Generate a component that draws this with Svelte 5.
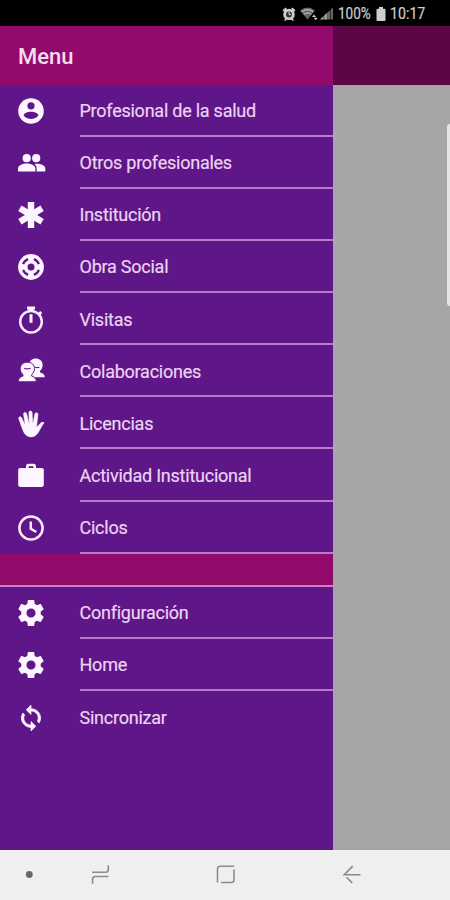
<script lang="ts">
	type Item = { label: string; icon: string };

	const main: Item[] = [
		{ label: 'Profesional de la salud', icon: 'contact' },
		{ label: 'Otros profesionales', icon: 'people' },
		{ label: 'Institución', icon: 'medical' },
		{ label: 'Obra Social', icon: 'help' },
		{ label: 'Visitas', icon: 'stopwatch' },
		{ label: 'Colaboraciones', icon: 'team' },
		{ label: 'Licencias', icon: 'hand' },
		{ label: 'Actividad Institucional', icon: 'briefcase' },
		{ label: 'Ciclos', icon: 'clock' }
	];

	const extra: Item[] = [
		{ label: 'Configuración', icon: 'settings' },
		{ label: 'Home', icon: 'settings' },
		{ label: 'Sincronizar', icon: 'sync' }
	];
</script>

{#snippet glyph(name: string)}
	<svg class="icon" viewBox="0 0 26 26" aria-hidden="true">
		{#if name === 'contact'}
			<circle cx="13" cy="13" r="12.8" />
			<circle class="hole" cx="13" cy="7.8" r="3.6" />
			<path class="hole" d="M5.6 17.6c0-2.7 4.2-3.9 7.4-3.9s7.4 1.2 7.4 3.9c-1.7 2.300-4.400 3.500-7.400 3.500s-5.700-1.200-7.400-3.500z" />
		{:else if name === 'people'}
			<circle cx="8.700" cy="8.200" r="4.100" />
			<circle cx="18.200" cy="8.200" r="4.100" />
			<path d="M0 21.500v-3c0-3.300 5.200-5 8.700-5s8.700 1.700 8.700 5v3z" />
			<path d="M18.700 21.500v-3.300c0-1.800-.9-3.200-2.300-4.300 4.200-.7 10.900.6 10.900 4.600v3z" />
		{:else if name === 'medical'}
			<path class="line thick" d="M13 0v26M1.900 6.300l22.200 13.400M24.100 6.300L1.900 19.700" />
		{:else if name === 'help'}
			<circle cx="13" cy="13" r="12.900" />
			<circle class="hole" cx="13" cy="13" r="3.500" />
			<path class="cut" d="M5.100 10.100A8.400 8.400 0 0 1 10.100 5.100M15.900 5.100a8.400 8.400 0 0 1 5 5M20.900 15.900a8.400 8.400 0 0 1-5 5M10.100 20.900a8.400 8.400 0 0 1-5-5" />
		{:else if name === 'stopwatch'}
			<circle class="line" cx="13" cy="14.700" r="10.800" />
			<path d="M9-.6h8v3H9zM10.300 2h5.400v2.500h-5.400zM11.500 7.300h3v8.500h-3zM20 6.300l2.200-2.300 2 2-2.100 2.400z" />
		{:else if name === 'team'}
			<path d="M10.6 5.800C11.200 2 14.100-.6 17.600-.6c4 0 7 2.500 7 6.100 0 2.700-.7 5-2.500 6.200l-.1 1.800c2.700.6 4.700 1.800 4.800 4.800H13z" />
			<path class="outlined" d="M9.400 3.200c4.200 0 7.100 2.700 7.100 6.200 0 2.500-.8 4.700-2.700 6l-.1 1.700c2.600.7 4.600 2.300 4.600 5.700H.2c0-3.400 2-5 4.800-5.700l-.1-1.700c-1.900-1.300-2.700-3.500-2.700-6 0-3.500 3-6.200 7.200-6.200z" />
			<path class="crease" d="M6.200 9.300c2 .7 4.300.7 6.400 0M17.200 8.300c1.300.5 2.800.5 4.200 0" />
		{:else if name === 'hand'}
			<path class="fat" d="M6.800 22.800C4.700 19.500 2.700 12.800.9 8c-.8-2.100 1.800-3.300 2.800-1.100l3 6.300.4-.1L5.600 3.400c-.4-2.200 2.400-2.900 3-.6l2.100 9.100h.5L10.900 1.700c0-2.200 3.100-2.200 3.200 0l.6 10h.5l1.700-8.600c.5-2.100 3.300-1.500 3 .7l-1.400 12.300c1.500-.5 2.200-2.100 3.500-3.400 1.200-1.200 2.700-1.800 4.100-1-2.300 2.700-4.200 7.400-7 11.300-2.800 3.800-9.500 4-12.300-.2z" />
		{:else if name === 'briefcase'}
			<path fill-rule="evenodd" d="M8 4.900V3.100c0-1.400.9-2.400 2.300-2.400h5.400c1.400 0 2.300 1 2.300 2.400v1.800h5.600c1.300 0 2.200.9 2.200 2.200v14.700c0 1.300-.9 2.200-2.200 2.200H2.400C1.100 24 .2 23.100.2 21.800V7.100c0-1.300.9-2.200 2.200-2.200zm2.600 0h4.800V3.300h-4.800z" />
		{:else if name === 'clock'}
			<circle class="line" cx="13" cy="13" r="11.600" />
			<path class="line" d="M12.800 6.500v7.200l5.500 3.300" />
		{:else if name === 'settings'}
			<path transform="matrix(1.3 0 0 1.3 -2.6 -2.6)" d="M19.43 12.98c.04-.32.07-.64.07-.98s-.03-.66-.07-.98l2.11-1.65c.19-.15.24-.42.12-.64l-2-3.46c-.12-.22-.39-.3-.61-.22l-2.49 1c-.52-.4-1.08-.73-1.69-.98l-.38-2.65C14.46 2.18 14.25 2 14 2h-4c-.25 0-.46.18-.49.42l-.38 2.65c-.61.25-1.17.59-1.69.98l-2.49-1c-.23-.09-.49 0-.61.22l-2 3.46c-.13.22-.07.49.12.64l2.11 1.65c-.04.32-.07.65-.07.98s.03.66.07.98l-2.11 1.65c-.19.15-.24.42-.12.64l2 3.46c.12.22.39.3.61.22l2.49-1c.52.4 1.08.73 1.69.98l.38 2.65c.03.24.24.42.49.42h4c.25 0 .46-.18.49-.42l.38-2.65c.61-.25 1.17-.59 1.69-.98l2.49 1c.23.09.49 0 .61-.22l2-3.46c.12-.22.07-.49-.12-.64l-2.11-1.65zM12 15.5c-1.93 0-3.5-1.57-3.5-3.5s1.57-3.5 3.5-3.5 3.5 1.57 3.5 3.5-1.57 3.5-3.5 3.5z" />
		{:else if name === 'sync'}
			<path class="fat" transform="matrix(1.2 0 0 1.17 -1.4 -1)" d="M12 4V1L8 5l4 4V6c3.31 0 6 2.69 6 6 0 1.01-.25 1.97-.7 2.8l1.46 1.46C19.54 15.03 20 13.57 20 12c0-4.42-3.58-8-8-8zm0 14c-3.31 0-6-2.69-6-6 0-1.01.25-1.97.7-2.8L5.24 7.74C4.46 8.97 4 10.43 4 12c0 4.42 3.58 8 8 8v3l4-4-4-4v3z" />
		{/if}
	</svg>
{/snippet}

{#snippet list(items: Item[])}
	<ul class="list">
		{#each items as item}
			<li class="item">
				{@render glyph(item.icon)}
				<span class="label">{item.label}</span>
			</li>
		{/each}
	</ul>
{/snippet}

<div class="screen">
	<div class="status">
		<svg class="alarm" viewBox="0 0 14 14" aria-hidden="true">
			<path d="M.5 3.2L3.6.5 5 2 2 4.7zM13.5 3.2L10.4.5 9 2l3 2.7zM1.8 13.6l2-2.4 1.4 1-1.7 1.6zM12.2 13.6l-2-2.4-1.4 1 1.7 1.6z" />
			<circle cx="7" cy="7.400" r="5.700" />
			<circle class="face" cx="7" cy="7.400" r="3" />
			<path class="hands" d="M7 5v2.600h2.200" />
		</svg>
		<svg class="wifi" viewBox="0 0 18 14" aria-hidden="true">
			<path class="dim" d="M0 3.6Q7.5-2.5 15 3.6L7.5 12.5z" />
			<path class="arc" d="M1.8 4.8q5.7-4.4 11.4 0M3.8 7.2q3.7-2.8 7.4 0" />
			<path d="M12 10l2-2.6L16 10zM13.7 10.7h4l-2 2.6z" />
		</svg>
		<svg class="signal" viewBox="0 0 14 13" aria-hidden="true">
			<path class="dim" d="M0 12.5L13 .5v12z" />
			<path d="M0 12.5l8-7.4v7.4z" opacity=".65" />
			<path class="gap" d="M4 7v6M7.3 4v9M10.5 1v12" />
		</svg>
		<span class="percent">100%</span>
		<svg class="battery" viewBox="0 0 10 14" aria-hidden="true">
			<path d="M3 0h4v1.7h1.5q1 0 1 1V13q0 1-1 1h-7q-1 0-1-1V2.7q0-1 1-1H3z" />
		</svg>
		<span class="time">10:17</span>
	</div>

	<div class="app">
		<nav class="drawer">
			<header class="title">Menu</header>
			{@render list(main)}
			<div class="band"></div>
			{@render list(extra)}
		</nav>
		<div class="page">
			<div class="toolbar"></div>
			<div class="edge"></div>
		</div>
	</div>

	<div class="navbar">
		<svg viewBox="0 0 450 50" aria-hidden="true">
			<circle cx="29.300" cy="24.500" r="3.400" />
			<path d="M92 22.300h13.500q2.800 0 2.800-2.800v-4.200M108.500 26.500H95.300q-2.700 0-2.700 2.700v4.500" />
			<path d="M217.500 32.500v-13.500q0-2.800 2.800-2.800h13.700M234 19.500v10.300q0 2.700-2.700 2.700H221" />
			<path d="M360.500 24.700H344.300l8.400-8.600M346.500 27.200l5.700 5.700" />
		</svg>
	</div>
</div>

<style>
	:global(body) {
		margin: 0;
	}

	.screen {
		display: flex;
		flex-direction: column;
		width: 450px;
		height: 900px;
		overflow: hidden;
		font-family: Roboto, sans-serif;
	}

	/* ---- Status bar ---- */

	.status {
		display: flex;
		align-items: center;
		box-sizing: border-box;
		height: 26px;
		padding: 1px 24px 0 0;
		justify-content: flex-end;
		background: #000;
		color: #cfcfcf;
		fill: #cfcfcf;
		font-size: 16.5px;
		white-space: nowrap;
	}

	.status span {
		display: block;
		transform-origin: left center;
		-webkit-text-stroke: 0.2px #cfcfcf;
	}

	.alarm {
		width: 14px;
		height: 14px;
		margin-right: 4px;
	}

	.face {
		fill: #333;
	}

	.hands {
		fill: none;
		stroke: #ddd;
	}

	.wifi {
		width: 18px;
		height: 14px;
		margin-right: 2px;
	}

	.dim {
		fill: #666;
	}

	.arc {
		fill: none;
		stroke: #bbb;
		stroke-width: 1.2;
	}

	.signal {
		width: 14px;
		height: 13px;
		margin-right: 4px;
	}

	.gap {
		stroke: #000;
		stroke-width: 0.6;
	}

	.percent {
		width: 33px;
		transform: scaleX(0.82);
	}

	.battery {
		width: 10px;
		height: 14px;
		margin: 0 4px 0 5px;
	}

	.time {
		width: 36px;
		transform: scaleX(0.86);
	}

	/* ---- Drawer ---- */

	.app {
		display: flex;
		flex: 1;
		min-height: 0;
	}

	.drawer {
		width: 333px;
		background: #5f1688;
		color: #ebd3f1;
	}

	.title {
		display: flex;
		align-items: center;
		box-sizing: border-box;
		height: 58.5px;
		padding: 2px 0 0 18px;
		background: #920a6c;
		color: #f7dcf0;
		font-size: 22px;
		font-weight: 500;
	}

	.list {
		margin: 0;
		padding: 0;
		list-style: none;
	}

	.item {
		display: flex;
		align-items: center;
		height: 52.15px;
		padding-left: 18px;
	}

	.icon {
		flex: none;
		width: 26px;
		height: 26px;
		margin: 1px 35.5px 0 0;
		overflow: visible;
		fill: #fdf5ff;
	}

	.icon .hole {
		fill: #5f1688;
	}

	.icon .cut {
		fill: none;
		stroke: #5f1688;
		stroke-width: 2.2;
	}

	.icon .line {
		fill: none;
		stroke: #fbeaff;
		stroke-width: 2.5;
	}

	.icon .thick {
		stroke: #fdf5ff;
		stroke-width: 6.4;
	}

	.icon .fat {
		stroke: #fdf5ff;
		stroke-width: 0.6;
	}

	.icon .outlined {
		stroke: #5f1688;
		stroke-width: 1;
	}

	.icon .crease {
		fill: none;
		stroke: #5f1688;
		stroke-width: 1.2;
	}

	.label {
		display: flex;
		flex: 1;
		align-items: center;
		box-sizing: border-box;
		height: 100%;
		padding-top: 2px;
		border-bottom: 2px solid #b47bca;
		font-size: 18px;
		letter-spacing: -0.24px;
		-webkit-text-stroke: 0.2px #ebd3f1;
	}

	.list:last-child .item:last-child .label {
		border-bottom-color: transparent;
	}

	.band {
		box-sizing: border-box;
		height: 33px;
		border-bottom: 2px solid #c583c6;
		background: #920a6c;
	}

	/* ---- Dimmed page behind the drawer ---- */

	.page {
		flex: 1;
		background: #a6a6a6;
	}

	.toolbar {
		height: 59px;
		background: #5c0647;
	}

	.edge {
		width: 3px;
		height: 182px;
		margin: 39px 0 0 auto;
		border-radius: 3px 0 0 3px;
		background: #e4e4e4;
	}

	/* ---- System navigation ---- */

	.navbar {
		height: 50.5px;
		background: #efefef;
	}

	.navbar svg {
		display: block;
		width: 450px;
		height: 50px;
	}

	.navbar path {
		fill: none;
		stroke: #8c8c8c;
		stroke-width: 1.6;
	}

	.navbar circle {
		fill: #686868;
	}
</style>
